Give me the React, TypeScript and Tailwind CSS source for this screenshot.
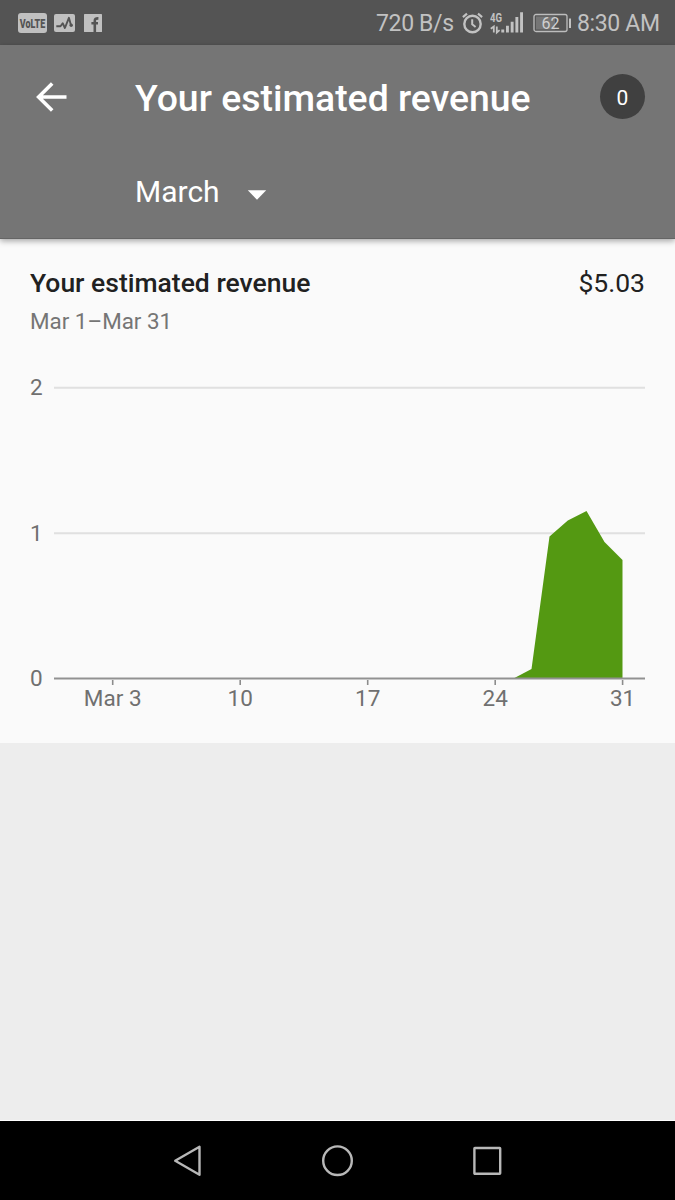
import React from "react";

const ticks = [
  { x: 112.7, label: "Mar 3" },
  { x: 240.2, label: "10" },
  { x: 367.7, label: "17" },
  { x: 495.2, label: "24" },
  { x: 622.6, label: "31" },
];

function StatusBar() {
  return (
    <div className="flex h-[45px] shrink-0 items-center justify-between bg-[#545454] pr-[15px] pl-[18px] text-[#c2c2c2]">
      <div className="flex items-center">
        <svg width="29" height="20" viewBox="0 0 29 20">
          <rect width="29" height="20" rx="3" fill="#c0c0c0" />
          <text transform="translate(14.5 14.6) scale(0.69 1)" textAnchor="middle" className="fill-[#545454] font-['Roboto',sans-serif] text-[13px] font-black">VoLTE</text>
        </svg>
        <svg className="ml-[7px]" width="21" height="18" viewBox="0 0 21 18">
          <rect width="21" height="18" rx="2" fill="#c0c0c0" />
          <path d="M2.3 12.3h4.2L8.7 9.2l2.2 4.8 4-10.2 2.2 8" fill="none" stroke="#545454" strokeWidth="1.9" strokeLinejoin="round" />
          <circle cx="17.2" cy="11.3" r="1.7" fill="#545454" />
        </svg>
        <svg className="ml-[9px]" width="18" height="18" viewBox="0 0 18 18">
          <rect width="18" height="18" rx="0.6" fill="#c0c0c0" />
          <path d="M10.8 18V7c0-2 .9-2.7 3.6-2.6M7.4 9.3h6.6" fill="none" stroke="#545454" strokeWidth="2.6" />
        </svg>
      </div>
      <div className="flex items-center">
        <span className="mt-[2px] w-[86px] text-[23px] leading-none tracking-[-0.35px] whitespace-nowrap">720 B/s</span>
        <svg width="21" height="22" viewBox="0 0 21 22" fill="none" stroke="#c2c2c2">
          <circle cx="10.5" cy="12" r="8.2" strokeWidth="2.4" />
          <path d="M10.2 7.3v5l3.4 2.7" strokeWidth="2" />
          <path d="M.9 5.1 5 1.7M20.1 5.1 16 1.7" strokeWidth="2.2" />
        </svg>
        <svg className="ml-[7px]" width="34" height="24" viewBox="0 0 34 24">
          <text x="0" y="10.5" textLength="12" lengthAdjust="spacingAndGlyphs" className="fill-[#c2c2c2] font-['Roboto',sans-serif] text-[12.5px] font-bold">4G</text>
          <path d="M3.8 21.5v-6L.8 17.8M6.8 15.5v6l2.8-2.4" fill="none" stroke="#c2c2c2" strokeWidth="1.8" />
          <path d="M11.3 18.5h2.9v3h-2.9zM16 14.7h2.9v6.8H16zM20.7 10.7h2.9v10.8h-2.9zM25.4 6h2.9v15.5h-2.9zM30.1 1.2h2.9v20.3h-2.9z" fill="#c2c2c2" />
        </svg>
        <svg className="ml-[9px]" width="39" height="20" viewBox="0 0 39 20">
          <rect x="3" y="3.5" width="19" height="13" fill="#757575" />
          <rect x="1" y="1.5" width="33" height="17" rx="2" fill="none" stroke="#bdbdbd" strokeWidth="1.3" />
          <path d="M36 5.5h2v9.5h-2z" fill="#c2c2c2" />
          <text x="17.5" y="15.5" textAnchor="middle" className="fill-[#d0d0d0] font-['Roboto',sans-serif] text-[16px]">62</text>
        </svg>
        <span className="mt-[2px] ml-[5px] w-[83px] text-[23px] leading-none tracking-[-0.35px] whitespace-nowrap">8:30 AM</span>
      </div>
    </div>
  );
}

function Header() {
  return (
    <header className="relative z-10 h-[194px] shrink-0 border-b border-[#656565] bg-[#757575] text-white shadow-[0_2px_6px_rgba(0,0,0,0.35)]">
      <div className="flex h-[104px] items-center pr-[30px] pl-[36px]">
        <svg className="-mt-[1px]" width="31" height="30" viewBox="0 0 31 30" fill="none" stroke="#fff" strokeWidth="3.6">
          <path d="M30.5 15H3M16.2 1.4 2.6 15l13.6 13.6" />
        </svg>
        <h1 className="mt-[3px] ml-[68px] text-[37.4px] leading-none font-medium whitespace-nowrap">Your estimated revenue</h1>
        <div className="-mt-px ml-auto flex size-[45px] items-center justify-center rounded-full bg-[#404040] pt-[4px] text-[21px] leading-none">0</div>
      </div>
      <div className="flex h-[86px] items-center pl-[135px]">
        <span className="w-[112px] text-[30px] leading-none">March</span>
        <svg className="mt-[5px]" width="20" height="10" viewBox="0 0 20 10">
          <path d="M.8.3h18.4L10 9.7z" fill="#fff" />
        </svg>
      </div>
    </header>
  );
}

function Chart() {
  return (
    <svg className="block" width="675" height="402" viewBox="0 341 675 402">
      <g className="fill-[#707070] font-['Roboto',sans-serif] text-[22.5px]">
        <text x="30" y="395">2</text>
        <text x="30" y="540.6">1</text>
        <text x="30" y="685.6">0</text>
        {ticks.map((t) => (
          <text key={t.label} x={t.x} y="706" textAnchor="middle">{t.label}</text>
        ))}
      </g>
      <path d="M54 387.7h591M54 533.3h591" stroke="#e0e0e0" strokeWidth="2" />
      <path d="M513.5 678.5l18-9.5 18-132.5 18.3-16 18.7-9.5 18 31 18 18v118.5z" fill="#549912" />
      <path d="M54 678.5h591" stroke="#919191" strokeWidth="1.8" />
      {ticks.map((t) => (
        <path key={t.label} d={`M${t.x} 680v5`} stroke="#8c8c8c" strokeWidth="1.6" />
      ))}
    </svg>
  );
}

function NavigationBar() {
  return (
    <nav className="flex h-[79px] shrink-0 items-center justify-between bg-black pr-[172px] pl-[172px]">
      <svg width="31" height="34" viewBox="0 0 31 34" fill="none" stroke="#b8b8b8" strokeWidth="2.4" strokeLinejoin="round">
        <path d="M27.5 2.8v28L3.2 16.8z" />
      </svg>
      <svg width="32" height="32" viewBox="0 0 32 32" fill="none" stroke="#b8b8b8" strokeWidth="2.4">
        <circle cx="15.5" cy="15.7" r="14.3" />
      </svg>
      <svg width="31" height="30" viewBox="0 0 31 30" fill="none" stroke="#b8b8b8" strokeWidth="2.4" strokeLinejoin="round">
        <rect x="2.4" y="2" width="25.8" height="25.8" rx="0.5" />
      </svg>
    </nav>
  );
}

export default function App() {
  return (
    <div className="flex h-[1200px] w-[675px] flex-col overflow-hidden bg-[#ededed] font-['Roboto',sans-serif]">
      <StatusBar />
      <Header />
      <main className="h-[504px] shrink-0 bg-[#fafafa] pt-[24px]">
        <div className="flex h-[39px] items-center justify-between px-[30px] text-[26.5px] leading-[39px] text-[#212121]">
          <h2 className="font-medium">Your estimated revenue</h2>
          <span>$5.03</span>
        </div>
        <p className="h-[39px] px-[30px] text-[22.4px] leading-[38px] text-[#757575]">Mar 1–Mar 31</p>
        <Chart />
      </main>
      <div className="flex-1 border-b border-white" />
      <NavigationBar />
    </div>
  );
}
